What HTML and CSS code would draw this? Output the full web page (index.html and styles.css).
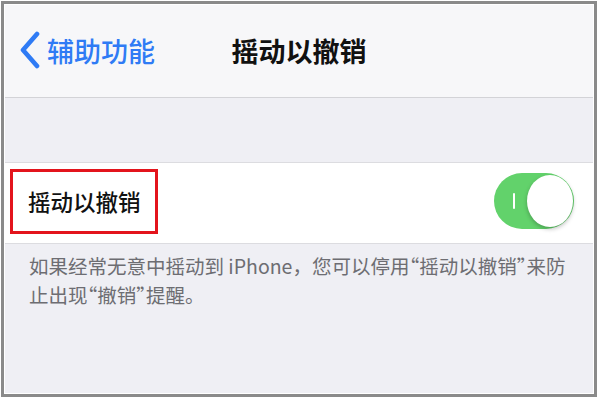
FILE: index.html
```html
<!DOCTYPE html>
<html lang="zh-CN">
<head>
<meta charset="utf-8">
<link rel="stylesheet" href="styles.css">
</head>
<body>
<div class="frame">
  <div class="screen">
    <header class="nav">
      <div class="back">
        <svg class="chev" width="22" height="38" viewBox="0 0 22 38"><polyline points="18,3 4,19 18,35" fill="none" stroke="#2f7bf5" stroke-width="4.6" stroke-linecap="round" stroke-linejoin="round"/></svg>
        <span class="back-label">辅助功能</span>
      </div>
      <h1 class="title">摇动以撤销</h1>
      <div></div>
    </header>
    <div class="spacer"></div>
    <div class="row">
      <div class="highlight"><span class="row-label">摇动以撤销</span></div>
      <div class="toggle"><span class="on-mark"></span><span class="knob"></span></div>
    </div>
    <p class="footer">如果经常无意中摇动到 iPhone，您可以停用<span class="q">“</span>摇动以撤销<span class="q">”</span>来防<br>止出现<span class="q">“</span>撤销<span class="q">”</span>提醒。</p>
  </div>
</div>
</body>
</html>
```

FILE: styles.css
```css
html, body {
  margin: 0;
  padding: 0;
  background: #ffffff;
}
body {
  font-family: "Noto Sans CJK SC", "Noto Sans", sans-serif;
}
.frame {
  box-sizing: border-box;
  margin: 1px;
  width: 596px;
  height: 396px;
  border: 3px solid #8a8a8a;
  padding: 1px;
  background: #ffffff;
}
.screen {
  height: 100%;
  background: #efeff4;
  display: flex;
  flex-direction: column;
}
.nav {
  box-sizing: border-box;
  height: 93px;
  background: #f7f7f9;
  border-bottom: 1px solid #d3d3d7;
  display: grid;
  grid-template-columns: 1fr auto 1fr;
  align-items: center;
  padding-bottom: 2px;
}
.back {
  display: flex;
  align-items: center;
  padding-left: 14px;
  gap: 6px;
}
.back-label {
  color: #2f7bf5;
  font-size: 27px;
  font-weight: 500;
  line-height: 1;
}
.title {
  margin: 0;
  font-size: 27px;
  font-weight: 700;
  color: #111111;
  line-height: 1;
}
.spacer {
  height: 65px;
  border-bottom: 1px solid #dcdce0;
  box-sizing: border-box;
}
.row {
  box-sizing: border-box;
  height: 81px;
  background: #ffffff;
  border-bottom: 1px solid #dcdce0;
  display: flex;
  align-items: center;
  justify-content: space-between;
  padding: 0 19px 0 5px;
}
.highlight {
  box-sizing: border-box;
  width: 148px;
  height: 65px;
  border: 3px solid #e3141c;
  display: flex;
  align-items: center;
  padding-left: 15px;
  margin-top: -4px;
}
.row-label {
  font-size: 22.5px;
  font-weight: 500;
  color: #111111;
  line-height: 1;
}
.toggle {
  position: relative;
  width: 80px;
  height: 56px;
  border-radius: 28px;
  background: #62d26b;
  margin-top: -4px;
}
.on-mark {
  position: absolute;
  left: 19px;
  top: 20px;
  width: 2px;
  height: 16px;
  background: #ffffff;
  border-radius: 1px;
}
.knob {
  position: absolute;
  right: 1px;
  top: 2px;
  width: 46px;
  height: 52px;
  border-radius: 50%;
  background: #ffffff;
  box-shadow: 0 2px 4px rgba(0,0,0,0.25);
}
.footer {
  margin: 0;
  padding: 7px 0 0 24px;
  font-size: 19.5px;
  line-height: 29px;
  color: #6d6d72;
}
.q {
  font-feature-settings: "halt";
}
```
